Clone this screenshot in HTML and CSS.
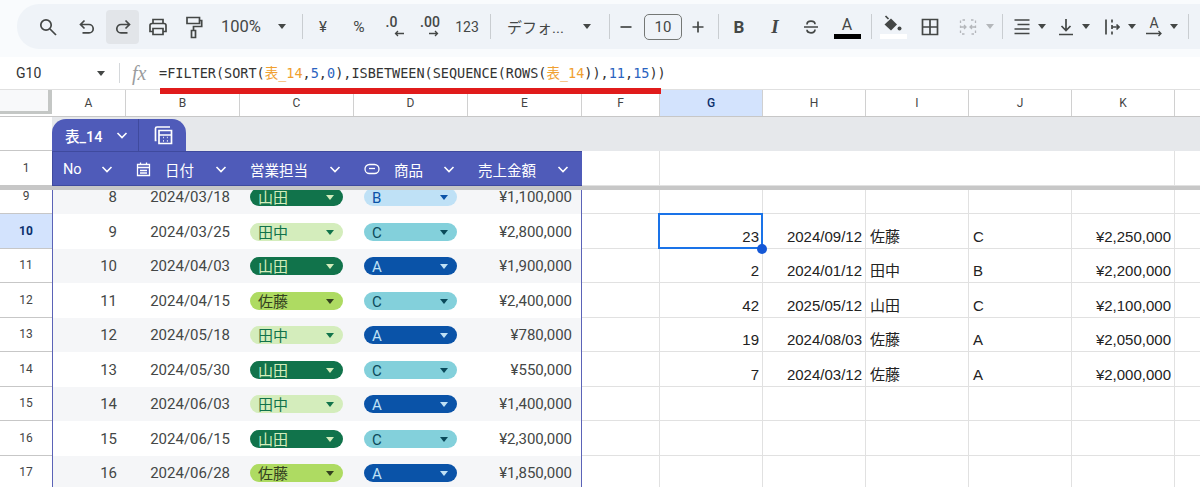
FILE: index.html
```html
<!DOCTYPE html>
<html lang="ja">
<head>
  <meta charset="UTF-8" />
  <title>売上 - Sheets</title>
  <link rel="stylesheet" href="styles.css">
</head>
<body>

  <!-- toolbar -->
  <div class="toolbar-wrap">
    <div class="toolbar">
      <span class="tb t-search"><svg class="ico" width="20" height="20" viewBox="0 0 20 20"><circle cx="8" cy="8" r="5.2"/><path d="M12 12l6 6"/></svg></span>
      <span class="tb t-undo"><svg class="ico" width="18" height="18" viewBox="0 0 18 18"><path d="M6.5 2.5L2.5 6.5l4 4M2.5 6.5h8.5a4.2 4.2 0 0 1 0 8.4H4.5"/></svg></span>
      <span class="tb t-redo"><svg class="ico" width="18" height="18" viewBox="0 0 18 18"><path d="M11.5 2.5l4 4-4 4M15.5 6.5H7a4.2 4.2 0 0 0 0 8.4h6.5"/></svg></span>
      <span class="tb t-print"><svg class="ico" width="22" height="22" viewBox="0 0 22 22"><path d="M6 7V3.5h10V7M6 15.5H3V9.5a2 2 0 0 1 2-2h12a2 2 0 0 1 2 2v6h-3"/><path d="M6 12.5h10v6H6z"/></svg></span>
      <span class="tb t-paint"><svg class="ico" width="18" height="24" viewBox="0 0 18 24"><path d="M2 2.5h12.5v6H2zM14.5 5.5h2.2v6H8.5v4"/><path d="M6.5 15.5h4v7h-4z"/></svg></span>
      <span class="t-zoom">100%</span>
      <i class="caret c-zoom"></i>
      <i class="sep s-1"></i>
      <span class="tb t-yen">¥</span>
      <span class="tb t-pct">%</span>
      <span class="tb t-dec1"><span class="dec">.0<svg class="ico thin shift-l" width="11" height="7" viewBox="0 0 11 7"><path d="M10 3.5H1.5M4 1L1.5 3.5 4 6"/></svg></span></span>
      <span class="tb t-dec2"><span class="dec">.00<svg class="ico thin shift-r" width="11" height="7" viewBox="0 0 11 7"><path d="M1 3.5h8.5M7 1l2.5 2.5L7 6"/></svg></span></span>
      <span class="tb t-num">123</span>
      <i class="sep s-2"></i>
      <span class="t-font">デフォ...</span>
      <i class="caret c-font"></i>
      <i class="sep s-3"></i>
      <span class="tb t-minus"><svg class="ico" width="14" height="14" viewBox="0 0 14 14"><path d="M1.5 7h11"/></svg></span>
      <span class="t-size">10</span>
      <span class="tb t-plus"><svg class="ico" width="14" height="14" viewBox="0 0 14 14"><path d="M1.5 7h11M7 1.5v11"/></svg></span>
      <i class="sep s-4"></i>
      <span class="tb t-bold">B</span>
      <span class="tb t-italic">I</span>
      <span class="tb t-strike"><svg class="ico" width="20" height="20" viewBox="0 0 20 20"><path d="M3 10h14M6 7.500c0-2 1.800-3.300 4-3.300s4 1.200 4 3M14 12.500c0 2-1.800 3.300-4 3.300s-4-1.200-4-3"/></svg></span>
      <span class="tb t-color"><span class="color-a">A</span><i class="color-bar"></i></span>
      <i class="sep s-5"></i>
      <span class="tb t-fill"><svg width="20" height="18" viewBox="0 0 20 18"><path class="bucket" d="M2.500 1l3 3"/><path d="M1.500 9.500L8 3.500l6 6-6 6z" fill="#444746"/><circle cx="16.500" cy="13.500" r="2" fill="#444746"/></svg><i class="fill-bar"></i></span>
      <span class="tb t-border"><svg class="ico" width="18" height="18" viewBox="0 0 18 18"><path d="M1.500 1.500h15v15h-15zM9 1.500v15M1.500 9h15"/></svg></span>
      <span class="tb t-merge"><svg class="ico muted" width="18" height="18" viewBox="0 0 18 18"><path stroke-dasharray="2.500 2.500" d="M6 2H1.500v14H6M12 2h4.500v14H12"/><path d="M1.500 9H7M5 7l2 2-2 2M16.500 9H11M13 7l-2 2 2 2"/></svg></span>
      <i class="caret muted-caret c-merge"></i>
      <i class="sep s-6"></i>
      <span class="tb t-align"><svg class="ico" width="18" height="18" viewBox="0 0 18 18"><path d="M1.500 2h15M4.500 6.500h12M1.500 11h15M1.500 15.500h15"/></svg></span>
      <i class="caret c-align"></i>
      <span class="tb t-valign"><svg class="ico" width="16" height="18" viewBox="0 0 16 18"><path d="M8 1v11M3.500 8L8 12.500 12.500 8M1 16.500h14"/></svg></span>
      <i class="caret c-valign"></i>
      <span class="tb t-wrap"><svg class="ico" width="16" height="18" viewBox="0 0 16 18"><path d="M2 1.500v15M8 1.500v3M8 7v4M8 13.500v3M8 9h7M12.500 6.500L15 9l-2.500 2.500"/></svg></span>
      <i class="caret c-wrap"></i>
      <span class="tb t-rotate"><span class="dec rot">A<svg class="ico thin" width="18" height="7" viewBox="0 0 18 7"><path d="M1 3.500h15M13.500 1L16 3.500 13.500 6"/></svg></span></span>
      <i class="caret c-rotate"></i>
      <i class="sep s-7"></i>
    </div>
  </div>

  <!-- formula bar -->
  <div class="formula-bar">
    <span class="name-box">G10</span>
    <i class="caret c-name"></i>
    <i class="formula-sep"></i>
    <span class="fx">fx</span>
    <span class="formula">=FILTER(SORT(<b class="ref">表_14</b>,<b class="num">5</b>,<b class="num">0</b>),ISBETWEEN(SEQUENCE(ROWS(<b class="ref">表_14</b>)),<b class="num">11</b>,<b class="num">15</b>))</span>
  </div>

  <!-- annotation line under the formula -->
  <div class="red-line"></div>

  <div class="col-heads">
    <div class="corner"></div>
    <div class="col-head w-a">A</div>
    <div class="col-head w-b">B</div>
    <div class="col-head w-b">C</div>
    <div class="col-head w-b">D</div>
    <div class="col-head w-b">E</div>
    <div class="col-head w-f">F</div>
    <div class="col-head w-g selected">G</div>
    <div class="col-head w-h">H</div>
    <div class="col-head w-h">I</div>
    <div class="col-head w-h">J</div>
    <div class="col-head w-h">K</div>
    <div class="col-head w-l"></div>
  </div>

  <!-- table name tab -->
  <div class="band-row">
    <div class="row-num blank"></div>
    <div class="band">
      <div class="tab">
        <span class="tab-name">表_14<svg class="chev" width="14" height="14" viewBox="0 0 14 14"><path d="M2.500 5L7 9.500 11.500 5"/></svg></span>
        <span class="tab-icon"><svg class="ico white" width="20" height="19" viewBox="0 0 20 19"><path d="M3.500 14.500h-1V2.500a1.500 1.500 0 0 1 1.500-1.500h13"/><path d="M6 4.500h12.500v13H6zM6 9h12.500M10 11.500h.8M13.900 11.500h.8M10 14.800h.8M13.900 14.800h.8"/></svg></span>
      </div>
    </div>
  </div>

  <!-- header row -->
  <div class="row head-row">
    <div class="row-num">1</div>
    <div class="tbl-head">
      <div class="th w-ta"><span>No</span><svg class="chev" width="14" height="14" viewBox="0 0 14 14"><path d="M2.500 5L7 9.500 11.500 5"/></svg></div>
      <div class="th w-tb"><span class="th-label"><svg class="ico white thin" width="15" height="16" viewBox="0 0 15 16"><path d="M1.500 3.500h12v11h-12zM1.500 6.500h12M4.500 1.500v2M10.500 1.500v2M4 9.500h7M4 12h7"/></svg>日付</span><svg class="chev" width="14" height="14" viewBox="0 0 14 14"><path d="M2.500 5L7 9.500 11.500 5"/></svg></div>
      <div class="th w-tb"><span>営業担当</span><svg class="chev" width="14" height="14" viewBox="0 0 14 14"><path d="M2.500 5L7 9.500 11.500 5"/></svg></div>
      <div class="th w-tb"><span class="th-label"><svg class="ico white thin" width="16" height="12" viewBox="0 0 16 12"><rect x="1" y="1.500" width="14" height="9" rx="4.500"/><path d="M5 5.500h6"/></svg>商品</span><svg class="chev" width="14" height="14" viewBox="0 0 14 14"><path d="M2.500 5L7 9.500 11.500 5"/></svg></div>
      <div class="th w-tb"><span>売上金額</span><svg class="chev" width="14" height="14" viewBox="0 0 14 14"><path d="M2.500 5L7 9.500 11.500 5"/></svg></div>
    </div>
    <div class="cell w-f"></div>
    <div class="cell w-merged"></div>
    <div class="cell w-l"></div>
  </div>

  <div class="freeze-bar"></div>

  <!-- frozen rows end, data rows start -->
  <div class="row short">
    <div class="row-num">9</div>
    <div class="tbl-row alt">
      <div class="td w-ta">8</div><div class="td w-tb">2024/03/18</div>
      <div class="td w-tb"><span class="pill yamada">山田</span></div>
      <div class="td w-tb"><span class="pill prod-b">B</span></div>
      <div class="td w-tb">¥1,100,000</div>
    </div>
    <div class="cell w-f"></div><div class="cell w-g"></div><div class="cell w-h"></div><div class="cell w-h"></div><div class="cell w-h"></div><div class="cell w-h"></div><div class="cell w-l"></div>
  </div>

  <div class="row">
    <div class="row-num selected">10</div>
    <div class="tbl-row">
      <div class="td w-ta">9</div><div class="td w-tb">2024/03/25</div>
      <div class="td w-tb"><span class="pill tanaka">田中</span></div>
      <div class="td w-tb"><span class="pill prod-c">C</span></div>
      <div class="td w-tb">¥2,800,000</div>
    </div>
    <div class="cell w-f"></div>
    <div class="cell w-g right active">23<i class="sel-box"></i><i class="sel-handle"></i></div>
    <div class="cell w-h right">2024/09/12</div><div class="cell w-h">佐藤</div><div class="cell w-h">C</div><div class="cell w-h right">¥2,250,000</div><div class="cell w-l"></div>
  </div>

  <div class="row">
    <div class="row-num">11</div>
    <div class="tbl-row alt">
      <div class="td w-ta">10</div><div class="td w-tb">2024/04/03</div>
      <div class="td w-tb"><span class="pill yamada">山田</span></div>
      <div class="td w-tb"><span class="pill prod-a">A</span></div>
      <div class="td w-tb">¥1,900,000</div>
    </div>
    <div class="cell w-f"></div>
    <div class="cell w-g right">2</div>
    <div class="cell w-h right">2024/01/12</div><div class="cell w-h">田中</div><div class="cell w-h">B</div><div class="cell w-h right">¥2,200,000</div><div class="cell w-l"></div>
  </div>

  <div class="row">
    <div class="row-num">12</div>
    <div class="tbl-row">
      <div class="td w-ta">11</div><div class="td w-tb">2024/04/15</div>
      <div class="td w-tb"><span class="pill sato">佐藤</span></div>
      <div class="td w-tb"><span class="pill prod-c">C</span></div>
      <div class="td w-tb">¥2,400,000</div>
    </div>
    <div class="cell w-f"></div>
    <div class="cell w-g right">42</div>
    <div class="cell w-h right">2025/05/12</div><div class="cell w-h">山田</div><div class="cell w-h">C</div><div class="cell w-h right">¥2,100,000</div><div class="cell w-l"></div>
  </div>

  <div class="row">
    <div class="row-num">13</div>
    <div class="tbl-row alt">
      <div class="td w-ta">12</div><div class="td w-tb">2024/05/18</div>
      <div class="td w-tb"><span class="pill tanaka">田中</span></div>
      <div class="td w-tb"><span class="pill prod-a">A</span></div>
      <div class="td w-tb">¥780,000</div>
    </div>
    <div class="cell w-f"></div>
    <div class="cell w-g right">19</div>
    <div class="cell w-h right">2024/08/03</div><div class="cell w-h">佐藤</div><div class="cell w-h">A</div><div class="cell w-h right">¥2,050,000</div><div class="cell w-l"></div>
  </div>

  <div class="row">
    <div class="row-num">14</div>
    <div class="tbl-row">
      <div class="td w-ta">13</div><div class="td w-tb">2024/05/30</div>
      <div class="td w-tb"><span class="pill yamada">山田</span></div>
      <div class="td w-tb"><span class="pill prod-c">C</span></div>
      <div class="td w-tb">¥550,000</div>
    </div>
    <div class="cell w-f"></div>
    <div class="cell w-g right">7</div>
    <div class="cell w-h right">2024/03/12</div><div class="cell w-h">佐藤</div><div class="cell w-h">A</div><div class="cell w-h right">¥2,000,000</div><div class="cell w-l"></div>
  </div>

  <div class="row">
    <div class="row-num">15</div>
    <div class="tbl-row alt">
      <div class="td w-ta">14</div><div class="td w-tb">2024/06/03</div>
      <div class="td w-tb"><span class="pill tanaka">田中</span></div>
      <div class="td w-tb"><span class="pill prod-a">A</span></div>
      <div class="td w-tb">¥1,400,000</div>
    </div>
    <div class="cell w-f"></div><div class="cell w-g"></div><div class="cell w-h"></div><div class="cell w-h"></div><div class="cell w-h"></div><div class="cell w-h"></div><div class="cell w-l"></div>
  </div>

  <div class="row">
    <div class="row-num">16</div>
    <div class="tbl-row">
      <div class="td w-ta">15</div><div class="td w-tb">2024/06/15</div>
      <div class="td w-tb"><span class="pill yamada">山田</span></div>
      <div class="td w-tb"><span class="pill prod-c">C</span></div>
      <div class="td w-tb">¥2,300,000</div>
    </div>
    <div class="cell w-f"></div><div class="cell w-g"></div><div class="cell w-h"></div><div class="cell w-h"></div><div class="cell w-h"></div><div class="cell w-h"></div><div class="cell w-l"></div>
  </div>

  <div class="row">
    <div class="row-num">17</div>
    <div class="tbl-row alt">
      <div class="td w-ta">16</div><div class="td w-tb">2024/06/28</div>
      <div class="td w-tb"><span class="pill sato">佐藤</span></div>
      <div class="td w-tb"><span class="pill prod-a">A</span></div>
      <div class="td w-tb">¥1,850,000</div>
    </div>
    <div class="cell w-f"></div><div class="cell w-g"></div><div class="cell w-h"></div><div class="cell w-h"></div><div class="cell w-h"></div><div class="cell w-h"></div><div class="cell w-l"></div>
  </div>

</body>
</html>
```

FILE: styles.css
```css
* { margin: 0; padding: 0; box-sizing: border-box; }

html, body {
  height: 487px;
  overflow: hidden;
}

body {
  position: relative;
  background: #fff;
  color: #444746;
  font-family: Roboto, "Noto Sans CJK JP", sans-serif;
}

/* toolbar */
.toolbar-wrap {
  height: 57px;
  padding: 4px 0 8px 17px;
  background: #f9fbfd;
}

.toolbar {
  height: 45px;
  padding-left: 13px;
  display: flex;
  align-items: center;
  background: #eff3f8;
  border-radius: 22px 0 0 22px;
}

.tb {
  width: 36px;
  flex-shrink: 0;
  display: flex;
  flex-direction: column;
  align-items: center;
  justify-content: center;
  font-size: 14px;
}

.ico {
  fill: none;
  stroke: #444746;
  stroke-width: 1.7;
  display: block;
}
.ico.thin { stroke-width: 1.3; }
.ico.muted { stroke: #b4b7bb; stroke-width: 1.3; }
.ico.white { stroke: #fff; }
.shift-l { margin-left: 8px; margin-top: 1px; }
.shift-r { margin-left: 8px; margin-top: 1px; }

.sep {
  width: 1px;
  height: 25px;
  flex-shrink: 0;
  background: #c9cdd1;
}

.caret {
  width: 0;
  height: 0;
  flex-shrink: 0;
  border-left: 4.5px solid transparent;
  border-right: 4.5px solid transparent;
  border-top: 5px solid #444746;
}
.muted-caret { border-top-color: #b4b7bb; }

.t-undo { margin-left: 3px; }
.t-redo { margin-left: 1px; width: 33px; height: 34px; background: #e2e5e9; border-radius: 4px; }
.t-print { margin-left: 1px; }
.t-paint { width: 35px; }
.t-zoom { margin-left: 10px; width: 42px; flex-shrink: 0; font-size: 16.5px; white-space: nowrap; }
.c-zoom { margin-left: 15px; }
.s-1 { margin-left: 16px; }
.t-yen { margin-left: 2px; font-size: 15px; }
.t-pct { font-size: 15.5px; }
.t-dec2 { margin-left: -1px; }
.t-num { margin-left: 7px; width: 24px; font-size: 14px; }
.s-2 { margin-left: 11px; }
.t-font { margin-left: 16px; width: 49px; flex-shrink: 0; font-size: 15px; white-space: nowrap; }
.c-font { margin-left: 27px; }
.s-3 { margin-left: 18px; }
.t-minus { width: 32px; }
.t-size {
  margin-left: 2px;
  width: 38px;
  height: 26px;
  flex-shrink: 0;
  border: 1px solid #747775;
  border-radius: 5px;
  text-align: center;
  font-size: 15px;
  line-height: 24px;
}
.t-plus { width: 32px; }
.s-4 { margin-left: 4px; }
.t-bold { width: 40px; font-size: 17px; font-weight: 700; }
.t-italic { margin-left: -2px; font: italic 700 19px "Liberation Serif", serif; }
.t-color { height: 26px; padding-top: 2px; justify-content: flex-start; }
.color-a { font-size: 16px; line-height: 18px; }
.color-bar { width: 27px; height: 5px; background: #000; }
.s-5 { margin-left: 6px; }
.t-fill { margin-left: 3px; height: 30px; padding-top: 3px; justify-content: flex-start; }
.bucket { fill: none; stroke: #444746; stroke-width: 1.7; }
.fill-bar { width: 27px; height: 5px; background: #fff; margin-top: 1px; }
.t-border { margin-left: 1px; }
.t-merge { margin-left: 2px; }
.s-6 { margin-left: 8px; }
.t-align { margin-left: 3px; width: 32px; }
.t-valign { margin-left: 4px; width: 32px; }
.t-wrap { margin-left: 6px; width: 32px; }
.t-rotate { margin-left: 2px; width: 32px; }
.s-7 { margin-left: 10px; }

.dec {
  display: flex;
  flex-direction: column;
  align-items: flex-start;
  font-size: 14px;
  font-weight: 500;
  line-height: 13px;
}
.rot { align-items: center; font-weight: 400; font-size: 14px; }

/* formula bar */
.formula-bar {
  height: 33px;
  padding-left: 16px;
  display: flex;
  align-items: center;
  background: #fff;
  border-bottom: 1px solid #e0e0e0;
}

.name-box { width: 81px; font-size: 14px; color: #333; }

.formula-sep {
  width: 1px;
  height: 20px;
  margin-left: 14px;
  background: #d5d8db;
}

.fx {
  width: 39px;
  padding-left: 12px;
  font: italic 20px "Liberation Serif", serif;
  color: #9a9c9e;
}

.formula {
  margin-bottom: 2px;
  font-family: "DejaVu Sans Mono", "Noto Sans CJK JP", monospace;
  font-size: 13.5px;
  color: #333;
  white-space: nowrap;
}
.formula b { font-weight: 400; }
.ref { color: #f0a030; }
.num { color: #2a63c0; }

.red-line {
  position: absolute;
  left: 160px;
  top: 88px;
  width: 501px;
  height: 6px;
  background: #e01b1b;
  z-index: 5;
}

/* column letters */
.col-heads {
  height: 27px;
  display: flex;
  background: #fff;
  border-bottom: 1px solid #c7c7c7;
}

.corner {
  width: 52px;
  height: 24px;
  flex-shrink: 0;
  background: #f8f9fa;
  border-right: 4px solid #c4c7c5;
  border-bottom: 3px solid #c4c7c5;
}

.col-head {
  flex-shrink: 0;
  border-right: 1px solid #d0d0d0;
  text-align: center;
  font-size: 12px;
  line-height: 26px;
  color: #444;
}
.col-head.selected {
  background: #d3e3fd;
  color: #0b2f6b;
  font-weight: 500;
}

.w-a { width: 74px; }
.w-b { width: 114px; }
.w-f { width: 78px; }
.w-g { width: 103px; }
.w-h { width: 103px; }
.w-l { flex: 1; border-right: none !important; }
.w-merged { width: 515px; }
.w-ta { width: 73px; }
.w-tb { width: 114px; }

/* band holding the table tab */
.band-row {
  height: 34px;
  display: flex;
}

.band {
  flex: 1;
  padding-top: 2px;
  background: #e6e8eb;
}

.tab {
  width: 134px;
  height: 32px;
  display: flex;
  background: #4f5bb9;
  border-radius: 14px 14px 0 0;
  color: #fff;
}

.tab-name {
  width: 87px;
  padding-left: 13px;
  display: flex;
  align-items: center;
  gap: 13px;
  font-size: 14.5px;
  font-weight: 500;
  border-right: 1px solid #3f4a9e;
}

.tab-icon {
  flex: 1;
  display: flex;
  align-items: center;
  justify-content: center;
}

.chev {
  fill: none;
  stroke: #fff;
  stroke-width: 1.6;
  flex-shrink: 0;
}

/* rows */
.row {
  height: 34.5px;
  display: flex;
}

.head-row { height: 35px; }
.short { height: 24px; }

.row-num {
  width: 52px;
  flex-shrink: 0;
  display: flex;
  align-items: flex-end;
  justify-content: center;
  border-bottom: 1px solid #c7c7c7;
  background: #fff;
  font-size: 12px;
  line-height: 34px;
  color: #444;
}
.row-num.selected {
  background: #d3e3fd;
  color: #0b2f6b;
  font-weight: 700;
}

.tbl-head {
  width: 530px;
  flex-shrink: 0;
  display: flex;
  background: #4f5bb9;
  border-top: 1px solid #3f4a9e;
  border-left: 1px solid #3f4a9e;
  border-bottom: 1px solid #3f4a9e;
  color: #fff;
}

.th {
  padding: 1px 12px 0 10px;
  display: flex;
  align-items: center;
  justify-content: space-between;
  font-size: 14.5px;
  white-space: nowrap;
}

.th-label {
  display: flex;
  align-items: center;
  gap: 14px;
}

.tbl-row {
  width: 530px;
  flex-shrink: 0;
  display: flex;
  align-items: flex-end;
  background: #fff;
  border-left: 1px solid #5b63b7;
  border-right: 1px solid #5b63b7;
}
.tbl-row.alt { background: #f5f6f8; }

.td {
  height: 34px;
  padding: 0 10px 10px 0;
  display: flex;
  align-items: flex-end;
  justify-content: flex-end;
  font-size: 15px;
  line-height: 14px;
  flex-shrink: 0;
}
.td:first-child { padding-right: 9px; }

.pill {
  position: relative;
  width: 93px;
  height: 18px;
  margin: 0 1px -2px 0;
  padding-left: 8px;
  border-radius: 9px;
  font-size: 15px;
  line-height: 20px;
  white-space: nowrap;
}
.pill::after {
  content: "";
  position: absolute;
  right: 9px;
  top: 7px;
  border-left: 4.5px solid transparent;
  border-right: 4.5px solid transparent;
  border-top: 5px solid currentColor;
}
.yamada { background: #11734b; color: #d4edbc; }
.tanaka { background: #d4edbc; color: #11734b; }
.sato { background: #aedb62; color: #33411f; }
.prod-a { background: #0a53a8; color: #bfe1f6; }
.prod-b { background: #bfe1f6; color: #0a53a8; }
.prod-c { background: #83d0db; color: #0a4a5a; }

.cell {
  position: relative;
  flex-shrink: 0;
  padding: 0 3px 2px 4px;
  display: flex;
  align-items: flex-end;
  border-right: 1px solid #e1e1e1;
  border-bottom: 1px solid #e1e1e1;
  font-family: "Liberation Sans", "Noto Sans CJK JP", sans-serif;
  font-size: 15px;
  line-height: 18px;
  color: #222;
}
.cell.right { justify-content: flex-end; }
.cell.active { z-index: 3; }

.sel-box {
  position: absolute;
  left: -2px;
  top: -1px;
  right: -1px;
  bottom: -1px;
  border: 2px solid #1a73e8;
}

.sel-handle {
  position: absolute;
  right: -5px;
  bottom: -6px;
  width: 10px;
  height: 10px;
  border-radius: 50%;
  background: #1558d6;
}

/* sits over the top of the first scrolled row */
.freeze-bar {
  position: relative;
  z-index: 2;
  height: 4px;
  background: #c7c7c7;
}
```
